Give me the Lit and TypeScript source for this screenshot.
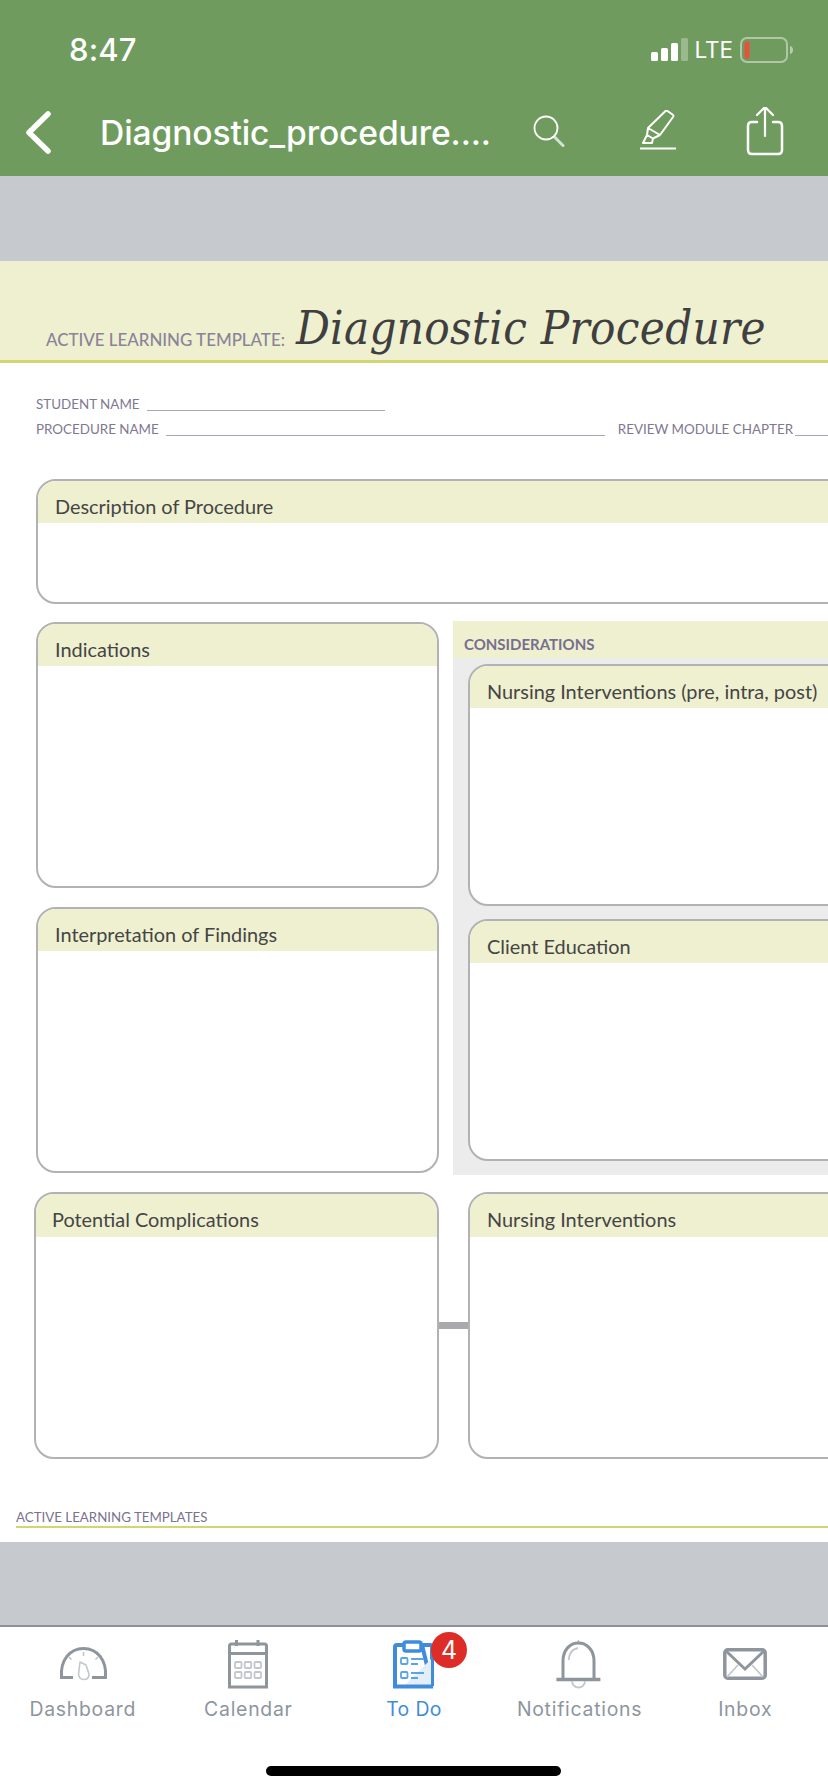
import { LitElement, html, css } from "lit";
import { customElement } from "lit/decorators.js";

const box = (title: string, cls: string) => html`
  <section class="box ${cls}"><h3 class="box-head">${title}</h3></section>
`;

@customElement("app-root")
export class AppRoot extends LitElement {
  static styles = css`
    :host { display: block; width: 828px; height: 1792px; overflow: hidden; background: #fff; font-family: "Lato", "Noto Sans", sans-serif; }
    * { box-sizing: border-box; }
    .top { height: 176px; background: #6f9c5e; color: #fff; font-family: "Inter", "Liberation Sans", sans-serif; }
    .status { height: 88px; position: relative; display: flex; align-items: center; padding: 11px 34px 0 69px; justify-content: space-between; }
    .time { font-size: 31px; font-weight: 500; letter-spacing: 0.2px; }
    .status-right { display: flex; align-items: center; }
    .lte { font-size: 22.5px; font-weight: 400; margin: 0 7px 0 6px; letter-spacing: 0; }
    .nav { height: 88px; display: flex; align-items: center; padding: 0 0 0 22px; position: relative; }
    .nav svg { display: block; flex: none; }
    .nav-title { font-size: 33.6px; font-weight: 500; margin-left: 47px; width: 390px; white-space: nowrap; letter-spacing: -0.1px; }
    .i-search { margin-left: 43px; }
    .i-pen { margin-left: 75px; }
    .i-share { margin-left: 68px; }
    .gray { background: #c6c9ce; }
    .gray-a { height: 85px; }
    .gray-b { height: 83px; }
    .paper { height: 1281px; background: #fff; overflow: hidden; display: flex; flex-direction: column; }
    .banner { height: 102px; flex: none; background: #eef0d0; border-bottom: 3px solid #d1d670; display: flex; align-items: flex-end; padding: 0 0 2px 46px; white-space: nowrap; }
    .banner-label { font-size: 16.9px; color: #8a8399; margin: 0 11px 8px 0; font-weight: 500; }
    .banner-title { font-family: "DejaVu Serif", "Liberation Serif", serif; font-stretch: condensed; font-style: italic; font-size: 47px; line-height: 60px; color: #3f3f3f; font-weight: 400; margin: 0; letter-spacing: 0.3px; }
    .fields { padding: 32px 0 0 36px; display: flex; flex-direction: column; gap: 7px; font-size: 13.4px; color: #7f7891; height: 116px; flex: none; white-space: nowrap; }
    .field { display: flex; height: 18px; align-items: center; }
    .line { height: 13px; margin-left: 7px; border-bottom: 1px solid #aaa6b5; flex: none; }
    .l-student { width: 238px; }
    .l-proc { width: 439px; margin-right: 13px; }
    .l-rev { width: 40px; margin-left: 2px; }
    .box { border: 2px solid #b2b2b4; border-radius: 20px; overflow: hidden; background: #fff; flex: none; }
    .box-head { margin: 0; height: 42px; background: #eef0d0; font-size: 19.9px; font-weight: 400; color: #454545; padding: 0 0 0 17px; line-height: 51px; white-space: nowrap; }
    .b-desc { width: 860px; height: 125px; margin-left: 36px; }
    .main { display: flex; margin-top: 18px; padding-left: 36px; align-items: flex-start; flex: none; }
    .col { width: 403px; flex: none; display: flex; flex-direction: column; gap: 19px; }
    .b-left { width: 403px; height: 266px; }
    .panel { width: 420px; margin-left: 14px; height: 554px; margin-top: -1px; background: #ececec; flex: none; display: flex; flex-direction: column; }
    .panel-head { height: 37px; background: #eef0d0; font-size: 15px; font-weight: 700; color: #776f8e; padding: 0 0 0 11px; line-height: 47px; flex: none; margin: 0; white-space: nowrap; }
    .panel-body { padding: 6px 0 0 15px; display: flex; flex-direction: column; gap: 13px; }
    .b-right { width: 420px; height: 242px; }
    .bottom { display: flex; margin-top: 17px; padding-left: 34px; align-items: center; flex: none; }
    .b-pot { width: 405px; height: 267px; }
    .b-pot .box-head { padding-left: 16px; height: 43px; }
    .b-nurse { width: 420px; height: 267px; }
    .b-nurse .box-head { height: 43px; }
    .link { width: 29px; height: 7px; background: #aaaaac; flex: none; }
    .foot { margin: 52px 0 0 16px; height: 17px; border-bottom: 2px solid #d1d670; font-size: 13.3px; color: #7a7290; line-height: 13px; white-space: nowrap; flex: none; }
    .tabs { height: 167px; border-top: 2px solid #8d9196; background: #fff; display: grid; grid-template-columns: repeat(5, 1fr); padding-top: 13px; position: relative; font-family: "Inter", "Liberation Sans", sans-serif; align-content: start; }
    .tab { display: flex; flex-direction: column; align-items: center; color: #8e959d; font-size: 19.4px; letter-spacing: 0.75px; position: relative; }
    .tab svg { display: block; height: 50px; width: 60px; }
    .tab span { display: block; margin-top: 7px; line-height: 24px; }
    .tab.on { color: #3f8cdc; letter-spacing: 0.4px; }
    .badge { position: absolute; left: 100px; top: -8px; width: 36px; height: 36px; border-radius: 50%; background: #de2d27; color: #fff; font-size: 25px; letter-spacing: 0; text-align: center; line-height: 36px; }
    .home { position: absolute; left: 266px; top: 139px; width: 295px; height: 10px; border-radius: 5px; background: #000; }
  `;

  render() {
    return html`
      <header class="top">
        <div class="status">
          <span class="time">8:47</span>
          <div class="status-right">
            <svg width="37" height="23" viewBox="0 0 37 23">
              <rect x="0" y="14" width="7" height="9" rx="1.5" fill="#fff"/>
              <rect x="10" y="10" width="7" height="13" rx="1.5" fill="#fff"/>
              <rect x="20" y="5" width="7" height="18" rx="1.5" fill="#fff"/>
              <rect x="30" y="0" width="7" height="23" rx="1.5" fill="#fff" opacity=".3"/>
            </svg>
            <span class="lte">LTE</span>
            <svg width="54" height="26" viewBox="0 0 54 26">
              <rect x="1" y="1" width="46" height="24" rx="6" fill="none" stroke="#fff" stroke-opacity=".45" stroke-width="2"/>
              <rect x="4.5" y="4.5" width="5" height="17" rx="1.5" fill="#e8503f"/>
              <path d="M50 9c2 .6 3 2 3 4s-1 3.400-3 4z" fill="#fff" fill-opacity=".5"/>
            </svg>
          </div>
        </div>
        <nav class="nav">
          <svg width="31" height="45" viewBox="0 0 31 45"><path d="M26 4 7 22.500 26 41" fill="none" stroke="#fff" stroke-width="5.500" stroke-linecap="round" stroke-linejoin="round"/></svg>
          <div class="nav-title">Diagnostic_procedure....</div>
          <svg class="i-search" width="32" height="34" viewBox="0 0 32 34">
            <circle cx="13" cy="13" r="11.500" fill="none" stroke="#fff" stroke-width="1.800"/>
            <path d="M21.500 22 30 30.500" stroke="#fff" stroke-opacity=".7" stroke-width="3" stroke-linecap="round"/>
          </svg>
          <svg class="i-pen" width="38" height="44" viewBox="0 4 38 44">
            <path d="M0 42.500h36" stroke="#fff" stroke-width="2"/>
            <path d="M25 5.500q1-1.500 2.500-.5l5 3.500q1.500 1 .5 2.500L20 29 8 22zM8 22 7 29l6 3.500 7-3.500M7 29 3 37l9 0 1-4.500" fill="none" stroke="#fff" stroke-width="2" stroke-linejoin="round"/>
          </svg>
          <svg class="i-share" width="38" height="50" viewBox="0 2 38 50">
            <path d="M11 17H6q-4 0-4 4v24q0 4 4 4h26q4 0 4-4V21q0-4-4-4h-5" fill="none" stroke="#fff" stroke-width="2.500" stroke-linecap="round"/>
            <path d="M19 2v29M11 10l8-8 8 8" fill="none" stroke="#fff" stroke-width="2.200" stroke-linecap="round" stroke-linejoin="round"/>
          </svg>
        </nav>
      </header>
      <div class="gray gray-a"></div>
      <main class="paper">
        <div class="banner">
          <span class="banner-label">ACTIVE LEARNING TEMPLATE:</span>
          <h1 class="banner-title">Diagnostic Procedure</h1>
        </div>
        <div class="fields">
          <div class="field">STUDENT NAME<i class="line l-student"></i></div>
          <div class="field">PROCEDURE NAME<i class="line l-proc"></i>REVIEW MODULE CHAPTER<i class="line l-rev"></i></div>
        </div>
        ${box("Description of Procedure", "b-desc")}
        <div class="main">
          <div class="col">
            ${box("Indications", "b-left")}
            ${box("Interpretation of Findings", "b-left")}
          </div>
          <div class="panel">
            <h2 class="panel-head">CONSIDERATIONS</h2>
            <div class="panel-body">
              ${box("Nursing Interventions (pre, intra, post)", "b-right")}
              ${box("Client Education", "b-right")}
            </div>
          </div>
        </div>
        <div class="bottom">
          ${box("Potential Complications", "b-pot")}
          <div class="link"></div>
          ${box("Nursing Interventions", "b-nurse")}
        </div>
        <div class="foot">ACTIVE LEARNING TEMPLATES</div>
      </main>
      <div class="gray gray-b"></div>
      <footer class="tabs">
        <div class="tab">
          <svg viewBox="0 0 60 50">
            <path d="M20 37.500H8.500C7 20 17 8.500 30.500 8.500S54 20 52.500 37.500H39" fill="none" stroke="#8e959d" stroke-width="3"/>
            <path d="M30.500 12v4M16 17l2.500 2.500M45 17l-2.500 2.500" stroke="#bfc3c8" stroke-width="1.500"/>
            <path d="M27 22 33 25 36 34q0 5.500-5 5.500t-5.500-5.500z" fill="none" stroke="#c3c7cb" stroke-width="1.600" stroke-linejoin="round"/>
          </svg>
          <span>Dashboard</span>
        </div>
        <div class="tab">
          <svg viewBox="0 0 60 50">
            <path d="M11.500 47V6q0-2 2-2h33q2 0 2 2v41zM11.500 13.500h37M18.500 0v6M40 0v6" fill="none" stroke="#8e959d" stroke-width="3"/>
            <g fill="none" stroke="#c3c7cb" stroke-width="1.800">
              <rect x="17" y="22" width="6.500" height="6" rx="1"/><rect x="26.700" y="22" width="6.500" height="6" rx="1"/><rect x="36.500" y="22" width="6.500" height="6" rx="1"/>
              <rect x="17" y="32" width="6.500" height="6" rx="1"/><rect x="26.700" y="32" width="6.500" height="6" rx="1"/><rect x="36.500" y="32" width="6.500" height="6" rx="1"/>
            </g>
          </svg>
          <span>Calendar</span>
        </div>
        <div class="tab on">
          <svg viewBox="0 0 60 50">
            <path d="M11 46V7q0-2 2-2h6M38 5h8q2 0 2 2v39z" fill="#fff" stroke="#3f8cdc" stroke-width="4"/>
            <path d="M20 46 47 46V19z" fill="#e3eef9"/>
            <path d="M9 46.500h40" stroke="#3f8cdc" stroke-width="4"/>
            <path d="M20 9V4q0-2 2-2h13q2 0 2 2v5q0 2-2 2H22q-2 0-2-2z" fill="#fff" stroke="#3f8cdc" stroke-width="3.500"/>
            <g fill="none" stroke="#5aa4e8" stroke-width="1.800">
              <rect x="17" y="18" width="6.500" height="6" rx="1"/><rect x="17" y="32" width="6.500" height="6" rx="1"/>
              <path d="M27 19h13M27 24h7M27 33h13M27 38h7"/>
            </g>
          </svg>
          <span>To Do</span>
          <div class="badge">4</div>
        </div>
        <div class="tab">
          <svg viewBox="0 0 60 50">
            <path d="M28.400 0v3" stroke="#bfc3c8" stroke-width="1.500"/>
            <path d="M13 39V21C13 10 20 3 28.400 3S44 10 44 21V39" fill="none" stroke="#8e959d" stroke-width="3"/>
            <path d="M6.400 39.500h44" stroke="#8e959d" stroke-width="3.500"/>
            <path d="M18.800 20C19 14 22 9 28 8" fill="none" stroke="#c3c7cb" stroke-width="1.800"/>
            <path d="M22 41a6.500 6.500 0 0 0 13 0" fill="none" stroke="#c3c7cb" stroke-width="1.800"/>
          </svg>
          <span>Notifications</span>
        </div>
        <div class="tab">
          <svg viewBox="0 0 60 50">
            <rect x="9.800" y="9.800" width="40.400" height="28.400" rx="3" fill="none" stroke="#8e959d" stroke-width="3.500"/>
            <path d="M11 11 30 29 49 11" fill="none" stroke="#8e959d" stroke-width="3"/>
            <path d="M12 37 23 25M48 37 37 25" stroke="#c3c7cb" stroke-width="1.800"/>
          </svg>
          <span>Inbox</span>
        </div>
        <div class="home"></div>
      </footer>
    `;
  }
}
